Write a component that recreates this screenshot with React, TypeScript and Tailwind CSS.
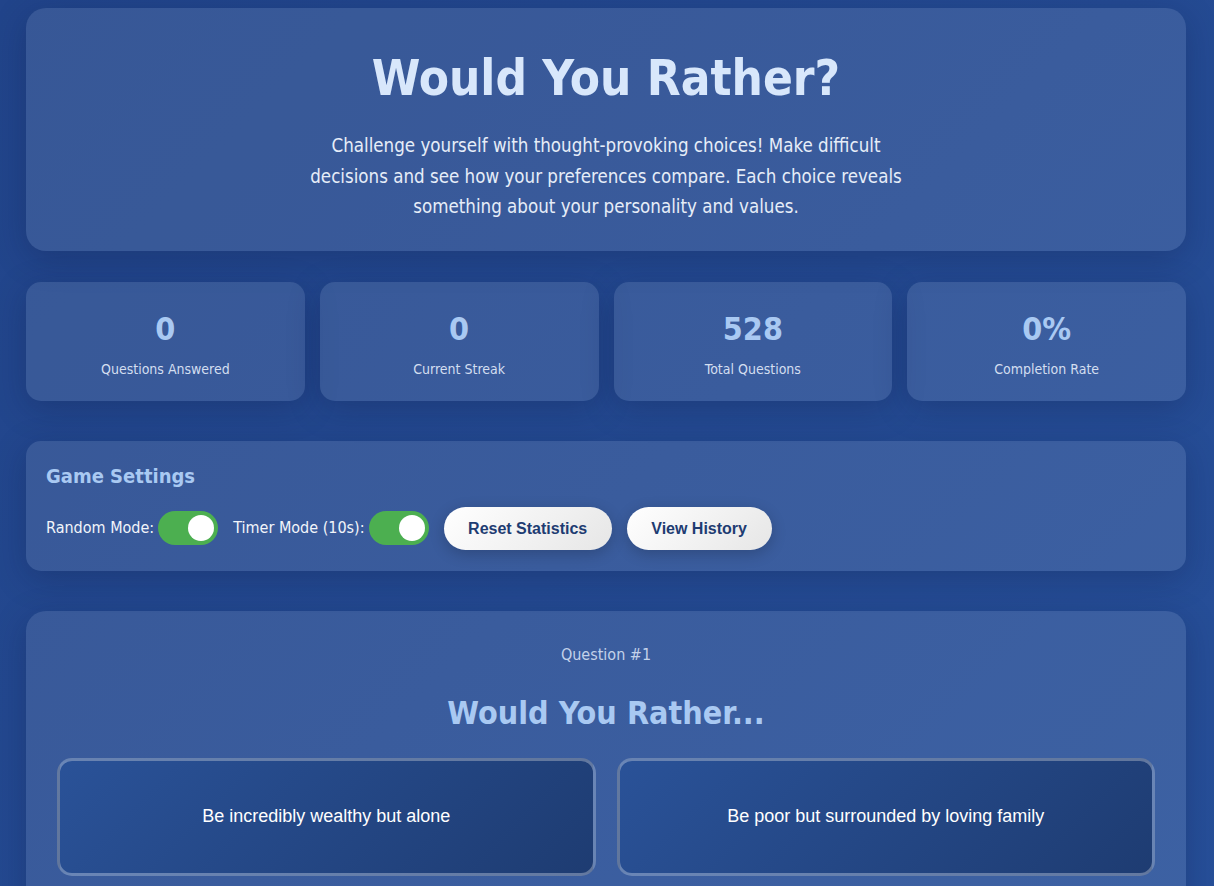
import React, { useState } from "react";

const tah = "font-['DejaVu_Sans_Condensed','DejaVu_Sans',sans-serif]";
const arial = "font-['Liberation_Sans',Arial,sans-serif]";

function Toggle({ on, onChange }: { on: boolean; onChange: () => void }) {
  return (
    <button
      onClick={onChange}
      className={`relative w-[60px] h-[34px] rounded-full shrink-0 ${on ? "bg-[#4caf50]" : "bg-[#9aa8c0]"}`}
    >
      <span
        className={`absolute top-[4px] w-[26px] h-[26px] rounded-full bg-white ${on ? "left-[30px]" : "left-[4px]"}`}
      />
    </button>
  );
}

function Stat({ value, label }: { value: string; label: string }) {
  return (
    <div className="rounded-[15px] bg-white/10 shadow-[0_8px_32px_rgba(10,20,60,0.25)] pt-[28px] pb-[21px] text-center">
      <div className={`${tah} text-[32px] leading-[38px] font-bold text-[#a9c9f2]`}>{value}</div>
      <div className={`${tah} mt-[11px] text-[14px] leading-[21px] text-[#d3def0]`}>{label}</div>
    </div>
  );
}

export default function App() {
  const [random, setRandom] = useState(true);
  const [timer, setTimer] = useState(true);
  return (
    <div className={`min-h-screen bg-[linear-gradient(135deg,#21448a_0%,#27509a_100%)] ${tah}`}>
      <div className="pl-[26px] pr-[28px] pt-[8px] pb-[40px] flex flex-col">
        <div className="rounded-[20px] bg-white/10 shadow-[0_8px_32px_rgba(10,20,60,0.25)] pt-[42px] pb-[28px] px-[40px] text-center">
          <h1 className="text-[49px] leading-[58px] font-bold text-[#d8e7fb]">Would You Rather?</h1>
          <p className="mt-[23px] mx-auto max-w-[620px] text-[18.6px] leading-[30.5px] text-[#e6edf8]">
            Challenge yourself with thought-provoking choices! Make difficult decisions and see how your preferences compare. Each choice reveals something about your personality and values.
          </p>
        </div>

        <div className="mt-[31px] grid grid-cols-4 gap-[15px]">
          <Stat value="0" label="Questions Answered" />
          <Stat value="0" label="Current Streak" />
          <Stat value="528" label="Total Questions" />
          <Stat value="0%" label="Completion Rate" />
        </div>

        <div className="mt-[40px] rounded-[15px] bg-white/10 shadow-[0_8px_32px_rgba(10,20,60,0.25)] pt-[20px] pb-[21px] px-[20px]">
          <h3 className="text-[20px] leading-[30px] font-bold text-[#a9c9f2]">Game Settings</h3>
          <div className="mt-[16px] flex items-center gap-[15px]">
            <label className="flex items-center gap-[4px] text-[16px] text-[#f2f5fa]">
              Random Mode:
              <Toggle on={random} onChange={() => setRandom(!random)} />
            </label>
            <label className="flex items-center gap-[4px] text-[16px] text-[#f2f5fa]">
              Timer Mode (10s):
              <Toggle on={timer} onChange={() => setTimer(!timer)} />
            </label>
            <button className={`${arial} rounded-full bg-[linear-gradient(135deg,#ffffff,#e6e6e6)] shadow-[0_4px_15px_rgba(0,0,0,0.2)] px-[24.5px] py-[12px] text-[16px] leading-[19px] font-bold text-[#1e3c72]`}>
              Reset Statistics
            </button>
            <button className={`${arial} rounded-full bg-[linear-gradient(135deg,#ffffff,#e6e6e6)] shadow-[0_4px_15px_rgba(0,0,0,0.2)] px-[24.5px] py-[12px] text-[16px] leading-[19px] font-bold text-[#1e3c72]`}>
              View History
            </button>
          </div>
        </div>

        <div className="mt-[40px] rounded-[20px] bg-white/10 shadow-[0_8px_32px_rgba(10,20,60,0.25)] px-[31px] pt-[32px] pb-[31px] text-center">
          <div className="text-[16px] leading-[24px] text-[#c3d2ea]">Question #1</div>
          <h2 className="mt-[27px] text-[32px] leading-[38px] font-bold text-[#a9c9f2]">Would You Rather...</h2>
          <div className="mt-[26px] grid grid-cols-2 gap-[21px]">
            <button className={`${arial} h-[118px] rounded-[15px] border-[3px] border-white/30 bg-[linear-gradient(135deg,#2a5298,#1e3c72)] text-[18px] text-white`}>
              Be incredibly wealthy but alone
            </button>
            <button className={`${arial} h-[118px] rounded-[15px] border-[3px] border-white/30 bg-[linear-gradient(135deg,#2a5298,#1e3c72)] text-[18px] text-white`}>
              Be poor but surrounded by loving family
            </button>
          </div>
          <div className="mt-[30px] flex justify-center gap-[15px]">
            <button className={`${arial} rounded-full bg-[linear-gradient(135deg,#ffffff,#e6e6e6)] px-[25px] py-[12px] text-[16px] font-bold text-[#1e3c72]`}>
              Skip Question
            </button>
          </div>
        </div>
      </div>
    </div>
  );
}
